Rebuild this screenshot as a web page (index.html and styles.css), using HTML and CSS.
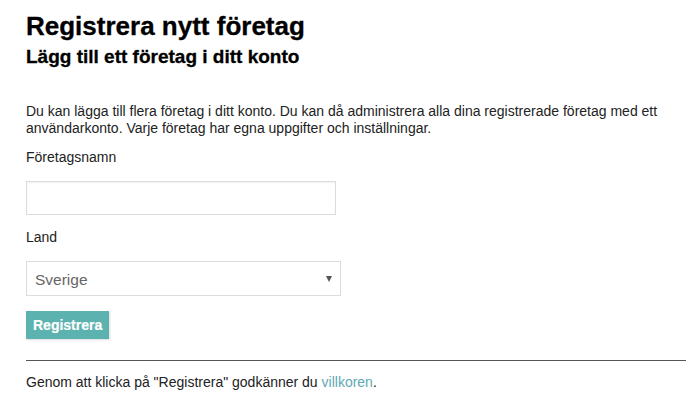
FILE: index.html
```html
<!DOCTYPE html>
<html lang="sv">
<head>
<meta charset="utf-8">
<title>Registrera nytt företag</title>
<link rel="stylesheet" href="styles.css">
</head>
<body>
<main class="page">
  <h1 class="title">Registrera nytt företag</h1>
  <h2 class="subtitle">Lägg till ett företag i ditt konto</h2>
  <p class="intro">Du kan lägga till flera företag i ditt konto. Du kan då administrera alla dina registrerade företag med ett användarkonto. Varje företag har egna uppgifter och inställningar.</p>
  <form class="form">
    <label class="label label-first" for="name">Företagsnamn</label>
    <input class="input" id="name" type="text">
    <label class="label" for="country">Land</label>
    <div class="select" id="country">
      <span class="select-value">Sverige</span>
      <span class="select-arrow"></span>
    </div>
    <button class="button" type="button">Registrera</button>
  </form>
  <hr class="rule">
  <p class="terms">Genom att klicka på "Registrera" godkänner du <a class="link" href="#">villkoren</a>.</p>
</main>
</body>
</html>
```
FILE: styles.css
```css
html, body {
  margin: 0;
  padding: 0;
  background: #fff;
}
body {
  font-family: "Liberation Sans", Arial, sans-serif;
  color: #222;
}
.page {
  width: 660px;
  margin-left: 26px;
  display: flow-root;
}
.title {
  margin: 11px 0 0;
  font-size: 26px;
  line-height: 30px;
  font-weight: bold;
  color: #000;
  -webkit-text-stroke: 0.3px #000;
}
.subtitle {
  margin: 5px 0 0;
  font-size: 19px;
  line-height: 22px;
  font-weight: bold;
  color: #000;
  -webkit-text-stroke: 0.3px #000;
}
.intro {
  margin: 35px 0 0;
  font-size: 14px;
  line-height: 17px;
}
.form {
  display: flex;
  flex-direction: column;
  align-items: flex-start;
}
.label {
  display: block;
  font-size: 14px;
  line-height: 16px;
}
.label-first {
  margin-top: 12px;
}
.input {
  box-sizing: border-box;
  width: 310px;
  height: 34px;
  margin: 16px 0 14px;
  border: 1px solid #dcdcdc;
  box-shadow: inset 0 1px 2px rgba(0,0,0,0.06);
  background: #fff;
  padding: 0 8px;
  outline: none;
}
.select {
  box-sizing: border-box;
  width: 315px;
  height: 35px;
  margin-top: 16px;
  border: 1px solid #dcdcdc;
  display: flex;
  align-items: center;
  justify-content: space-between;
  padding: 2px 8px 0;
  background: #fff;
}
.select-value {
  font-size: 15.5px;
  color: #666;
}
.select-arrow {
  width: 0;
  height: 0;
  border-left: 3px solid transparent;
  border-right: 3px solid transparent;
  border-top: 6px solid #555;
  margin-bottom: 2px;
}
.button {
  margin-top: 15px;
  height: 28px;
  padding: 0 7px;
  border: none;
  background: #5bb2af;
  color: #fff;
  font-family: "Liberation Sans", Arial, sans-serif;
  font-size: 14px;
  font-weight: bold;
  -webkit-text-stroke: 0.2px #fff;
  box-shadow: 1px 1px 2px rgba(0,0,0,0.15);
  cursor: pointer;
}
.rule {
  margin: 21px 0 0;
  border: none;
  border-top: 1px solid #555;
  height: 0;
}
.terms {
  margin: 13px 0 0;
  font-size: 14px;
  line-height: 16px;
}
.link {
  color: #5ea9b3;
  text-decoration: none;
}
```
